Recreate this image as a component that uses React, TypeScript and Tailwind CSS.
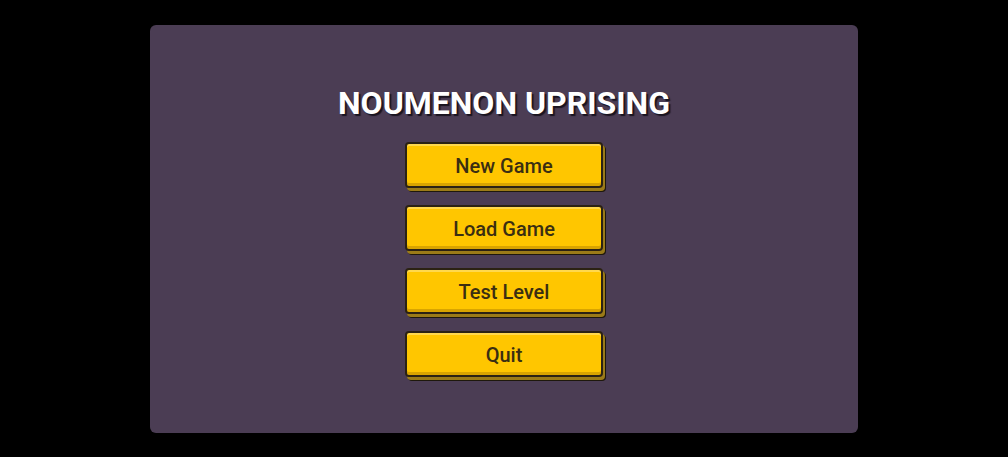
import React from "react";

const buttons = ["New Game", "Load Game", "Test Level", "Quit"];

function MenuButton({ label }: { label: string }) {
  return (
    <div className="relative w-[198px] h-[46px] rounded-[4px] border-2 border-[#2b2213] bg-[#ffc600] shadow-[inset_0_2px_0_#ffd84d,inset_0_-3px_0_#d9a400,2px_3px_0_#9b7b18,3px_4px_0_#1e180c] flex items-center justify-center">
      <span className="text-[20px] font-medium text-[#3a2e12] leading-none pt-[1px] [font-family:Roboto,'Liberation_Sans',sans-serif]">
        {label}
      </span>
    </div>
  );
}

export default function App() {
  return (
    <div className="w-[1008px] h-[457px] bg-black flex pt-[25px] pl-[150px] [font-family:Roboto,'Liberation_Sans',sans-serif]">
      <div className="w-[708px] h-[408px] rounded-[6px] bg-[#4b3d54] flex flex-col items-center pt-[62px]">
        <h1 className="text-[32px] font-bold text-white leading-none [text-shadow:2px_2px_1px_#1a1420]">
          NOUMENON UPRISING
        </h1>
        <div className="flex flex-col gap-[17px] mt-[23px]">
          {buttons.map((b) => (
            <MenuButton key={b} label={b} />
          ))}
        </div>
      </div>
    </div>
  );
}
